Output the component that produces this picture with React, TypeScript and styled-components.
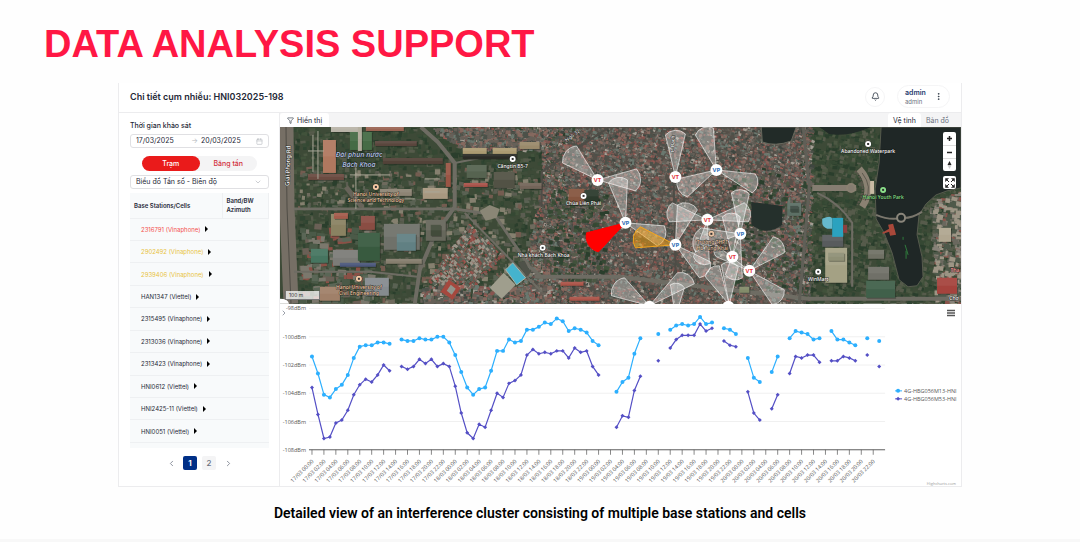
import { useState } from 'react';
import styled, { createGlobalStyle, css } from 'styled-components';
import { Bell, Calendar, ChevronDown, ChevronLeft, ChevronRight, Filter, MoreVertical } from 'lucide-react';

const Colors = {
  accent: '#ff1744',
  red: '#ea1b1b',
  navy: '#002f87',
  text: '#1f2937',
  gray: '#6b7280',
  line: '#ececee',
  soft: '#f4f4f5',
  table: '#f8fafb'
};

const GlobalStyle = createGlobalStyle`
  * {
    box-sizing: border-box;
  }
  body {
    margin: 0;
    background: #fefefe;
    font-family: Inter, 'Noto Sans', sans-serif;
    color: ${Colors.text};
  }
  button,
  input,
  select {
    font-family: inherit;
    color: inherit;
    margin: 0;
    padding: 0;
    border: none;
    background: none;
  }
  button {
    cursor: pointer;
  }
`;

const Page = styled.main`
  display: flex;
  flex-direction: column;
  min-height: 100vh;
  border-bottom: 3px solid #f8f8f8;
`;

const Title = styled.h1`
  margin: 0;
  padding: 22px 44px 17px;
  font-family: 'Liberation Sans', sans-serif;
  font-size: 38px;
  line-height: 44px;
  font-weight: 700;
  color: ${Colors.accent};
`;

const Caption = styled.p`
  margin: 0;
  padding-top: 16px;
  text-align: center;
  font-family: Roboto, sans-serif;
  font-size: 14px;
  line-height: 20px;
  font-weight: 600;
  color: #000;
`;

const Card = styled.section`
  margin: 0 118px;
  background: #fff;
  border: 1px solid ${Colors.line};
  border-top: none;
`;

const CardHeader = styled.header`
  display: flex;
  align-items: center;
  gap: 12px;
  height: 30px;
  padding: 0 11px 2px;
  border-bottom: 1px solid ${Colors.line};

  h2 {
    flex: 1;
    margin: 0;
    font-size: 9px;
    font-weight: 600;
  }
`;

const BellButton = styled.button`
  display: flex;
  align-items: center;
  justify-content: center;
  width: 20px;
  height: 20px;
  border: 1px solid #f5f5f6;
  border-radius: 50%;
`;

const UserPill = styled.button`
  display: flex;
  align-items: center;
  justify-content: space-between;
  width: 53px;
  height: 23px;
  padding: 0 6px 0 7px;
  border: 1px solid #f5f5f6;
  border-radius: 12px;
  text-align: left;

  span {
    display: block;
    font-size: 6px;
    line-height: 9px;
    color: ${Colors.gray};
  }
  .name {
    font-size: 7px;
    font-weight: 600;
    color: #1e3a6e;
  }
`;

const Columns = styled.div`
  display: grid;
  grid-template-columns: 161px minmax(0, 1fr);
`;

const Sidebar = styled.aside`
  display: flex;
  flex-direction: column;
  padding: 8px 10px 0 11px;
  border-right: 1px solid ${Colors.line};

  .field-label {
    font-size: 7px;
    line-height: 9px;
    font-weight: 500;
  }
`;

const DateRange = styled.div`
  display: flex;
  align-items: center;
  height: 14px;
  margin-top: 4px;
  padding: 0 5px;
  border: 1px solid #e0e0e3;
  border-radius: 3px;
  color: #b4b7bd;

  input {
    width: 56px;
    min-width: 0;
    font-size: 7px;
    line-height: 10px;
    color: ${Colors.text};
  }
  .arrow {
    width: 10px;
    font-size: 7px;
    line-height: 10px;
  }
`;

const Segment = styled.div`
  display: flex;
  align-self: center;
  width: 115px;
  margin: 8px 0 4px;
  border-radius: 8px;
  background: ${Colors.soft};
`;

const SegmentButton = styled.button<{ $active?: boolean }>`
  flex: 1;
  height: 15px;
  border-radius: 8px;
  font-size: 7px;
  font-weight: 500;
  color: ${({ $active }) => ($active ? '#fff' : '#d22f3c')};
  background: ${({ $active }) => ($active ? Colors.red : 'transparent')};
`;

const SelectBox = styled.div`
  display: grid;
  grid-template-columns: 1fr 14px;
  align-items: center;
  height: 14px;
  border: 1px solid #e0e0e3;
  border-radius: 3px;

  select {
    grid-column: 1 / 3;
    grid-row: 1;
    appearance: none;
    padding-left: 5px;
    font-size: 7px;
    line-height: 10px;
  }
  svg {
    grid-column: 2;
    grid-row: 1;
    color: #b4b7bd;
    pointer-events: none;
  }
`;

const TableBox = styled.div`
  margin-top: 4px;
  padding-bottom: 5px;
  background: ${Colors.table};
`;

const StationTable = styled.table`
  width: 100%;
  height: 250px;
  border-collapse: collapse;
  table-layout: fixed;
  font-size: 6px;
  line-height: 9px;

  th {
    height: 25px;
    padding: 0 4px;
    text-align: left;
    font-weight: 600;
    border-right: 1px solid #eef0f2;
    border-bottom: 1px solid #eef0f2;
  }
  th:first-child {
    width: 92px;
  }
  td {
    padding: 0 0 0 11px;
    border-bottom: 1px solid #eef0f2;
  }
`;

const StationButton = styled.button<{ $tone?: string }>`
  display: flex;
  align-items: center;
  gap: 5px;
  font-size: 6px;
  line-height: 9px;
  font-weight: 400;
  color: ${({ $tone }) => $tone || Colors.text};

  svg {
    color: #000;
  }
`;

const Pager = styled.nav`
  display: flex;
  justify-content: center;
  align-items: center;
  gap: 5px;
  padding-top: 8px;
  color: ${Colors.gray};
`;

const PageButton = styled.button<{ $active?: boolean }>`
  display: flex;
  align-items: center;
  justify-content: center;
  width: 14px;
  height: 14px;
  border-radius: 2px;
  font-size: 8px;
  font-weight: 500;
  background: ${Colors.soft};

  ${({ $active }) =>
    $active &&
    css`
      color: #fff;
      background: ${Colors.navy};
      font-weight: 700;
    `}
`;

const PagerArrow = styled(PageButton)`
  background: none;
`;

const Toolbar = styled.div`
  display: flex;
  height: 14px;
  padding-right: 7px;
  background: ${Colors.soft};

  .spacer {
    flex: 1;
  }
`;

const ToolbarTab = styled.button<{ $active?: boolean }>`
  display: flex;
  align-items: center;
  gap: 3px;
  padding: 0 5px;
  border-radius: 3px 3px 0 0;
  font-size: 7px;
  font-weight: 400;
  color: ${({ $active }) => ($active ? Colors.text : Colors.gray)};
  background: ${({ $active }) => ($active ? '#fff' : 'transparent')};

  &:first-child {
    padding: 0 7px;
  }
`;

const MapBox = styled.div`
  position: relative;

  > svg {
    display: block;
    width: 100%;
  }
`;

const MapControls = styled.div`
  position: absolute;
  top: 5px;
  right: 5px;
  display: flex;
  flex-direction: column;
  gap: 5px;
`;

const ControlGroup = styled.div`
  display: flex;
  flex-direction: column;
  border-radius: 2px;
  background: #fff;

  button {
    display: flex;
    align-items: center;
    justify-content: center;
    width: 13px;
    height: 13px;
    color: #222;
  }
  button + button {
    border-top: 1px solid #ddd;
  }
`;

const ScaleBar = styled.div`
  position: absolute;
  left: 5px;
  bottom: 4px;
  width: 35px;
  height: 9px;
  padding-left: 3px;
  border: 1px solid #777;
  border-top: none;
  background: rgba(255, 255, 255, 0.75);
  font-size: 5px;
  line-height: 8px;
  color: #333;
`;

const ChartBox = styled.div`
  position: relative;

  > svg {
    display: block;
    width: 100%;
  }
`;

const CollapseButton = styled.button`
  position: absolute;
  top: 5px;
  left: 0;
  display: flex;
  color: ${Colors.gray};
`;

const MenuButton = styled.button`
  position: absolute;
  top: 5px;
  right: 6px;
  display: flex;
`;

type Point = [number, number];

/* ---------- satellite layer ---------- */

const random = (seed: number) => () => {
  seed = (seed * 1664525 + 1013904223) % 4294967296;
  return seed / 4294967296;
};

const inside = (x: number, y: number, poly: Point[]) => {
  let hit = false;
  for (let i = 0, j = poly.length - 1; i < poly.length; j = i++) {
    const [xi, yi] = poly[i];
    const [xj, yj] = poly[j];
    if (yi > y !== yj > y && x < ((xj - xi) * (y - yi)) / (yj - yi) + xi) hit = !hit;
  }
  return hit;
};

type Scatter = { seed: number; area: Point[]; count: number; size: [number, number]; tilt: number; colors: string[] };

// one path per colour, every roof or tree is a small rotated quad
const scatter = ({ seed, area, count, size, tilt, colors }: Scatter) => {
  const next = random(seed);
  const paths = colors.map(() => '');
  const xs = area.map((p) => p[0]);
  const ys = area.map((p) => p[1]);
  const [x0, x1, y0, y1] = [Math.min(...xs), Math.max(...xs), Math.min(...ys), Math.max(...ys)];

  for (let i = 0; i < count; i++) {
    const x = x0 + next() * (x1 - x0);
    const y = y0 + next() * (y1 - y0);
    const w = size[0] + next() * (size[1] - size[0]);
    const h = size[0] + next() * (size[1] - size[0]) * 0.7;
    const a = tilt + (next() - 0.5) * 0.3;
    const c = Math.floor(next() * colors.length);
    if (!inside(x, y, area)) continue;
    const [ux, uy, vx, vy] = [Math.cos(a) * w, Math.sin(a) * w, -Math.sin(a) * h, Math.cos(a) * h];
    paths[c] += `M${x.toFixed(1)} ${y.toFixed(1)}l${ux.toFixed(1)} ${uy.toFixed(1)}l${vx.toFixed(1)} ${vy.toFixed(1)}l${(-ux).toFixed(1)} ${(-uy).toFixed(1)}z`;
  }
  return paths.map((d, i) => ({ d, fill: colors[i] }));
};

const rect = (x: number, y: number, w: number, h: number): Point[] => [
  [x, y],
  [x + w, y],
  [x + w, y + h],
  [x, y + h]
];

const TREES = ['#2f4431', '#384b36', '#41523b', '#2a3e2c', '#4c5843', '#565b4b', '#354833'];
const ROOFS = [
  '#8a544f', '#9c5f57', '#6c645f', '#7e786f', '#a39d93', '#4d554e', '#3f4640',
  '#7c5751', '#5e5c55', '#6a786f', '#4c5149', '#85695f', '#666058'
];
const CAMPUS = ['#6e6a5d', '#5b5d51', '#47533f', '#394935', '#745c50', '#5a6253', '#3f4d3a', '#85806f'];

const GROUND: Scatter[] = [
  { seed: 11, area: rect(0, 0, 290, 177), count: 2600, size: [2, 6], tilt: 0, colors: TREES },
  { seed: 12, area: rect(100, 40, 160, 137), count: 700, size: [2, 7], tilt: 0, colors: CAMPUS },
  { seed: 22, area: rect(18, 40, 90, 45), count: 120, size: [2, 6], tilt: 0, colors: CAMPUS },
  { seed: 13, area: rect(18, 95, 70, 82), count: 200, size: [3, 9], tilt: 0, colors: ['#8b5046', '#6a6056', '#7b786d', '#4b5a48', '#5a6656'] },
  { seed: 14, area: rect(520, 0, 162, 177), count: 2600, size: [2, 6], tilt: 0.2, colors: TREES },
  { seed: 15, area: [[262, 0], [533, 0], [530, 177], [240, 177], [250, 110], [262, 60]], count: 13000, size: [1, 4], tilt: 0.3, colors: ROOFS },
  { seed: 16, area: [[150, 0], [262, 0], [262, 22], [185, 22]], count: 1200, size: [1, 5], tilt: 0.1, colors: ROOFS },
  { seed: 17, area: [[190, 96], [224, 126], [182, 170], [148, 153]], count: 1900, size: [1, 4], tilt: 0.8, colors: ['#9d564f', '#8a4c46', '#73665e', '#586358', '#9a9488'] },
  { seed: 18, area: rect(140, 158, 130, 19), count: 420, size: [2, 5], tilt: 0, colors: ROOFS },
  { seed: 19, area: [[650, 72], [682, 64], [682, 177], [656, 177]], count: 500, size: [2, 6], tilt: 0.1, colors: ['#8b554c', '#878278', '#6a685e', '#4e594a', '#9d9585'] },
  { seed: 20, area: rect(450, 40, 85, 125), count: 240, size: [2, 5], tilt: 0.2, colors: TREES },
  { seed: 21, area: rect(268, 62, 60, 90), count: 200, size: [2, 6], tilt: 0.2, colors: TREES }
];

const BLOCKS: [number, number, number, number, string][] = [
  [43, 13, 13, 33, '#b0785f'],
  [28, 47, 36, 6, '#6b4b41'],
  [51, 0, 30, 5, '#b9b4a8'],
  [86, 0, 38, 4, '#9b6453'],
  [70, 5, 22, 18, '#456b45'],
  [78, 0, 4, 24, '#b0aa9a'],
  [95, 14, 42, 5, '#5a463d'],
  [103, 31, 60, 6, '#524238'],
  [166, 36, 5, 24, '#9a5545'],
  [143, 61, 25, 11, '#a89880'],
  [100, 62, 32, 7, '#8d8474'],
  [183, 21, 24, 6, '#ac9b72'],
  [213, 21, 24, 6, '#ac9b72'],
  [183, 27, 54, 5, '#2b2c26'],
  [240, 15, 20, 7, '#9a8a6b'],
  [184, 56, 24, 4, '#a8534a'],
  [187, 38, 20, 13, '#566350'],
  [214, 45, 21, 16, '#525245'],
  [240, 56, 22, 6, '#736559'],
  [31, 122, 17, 14, '#467560'],
  [51, 87, 15, 22, '#8a8262'],
  [54, 86, 14, 6, '#a45c4c'],
  [81, 89, 14, 14, '#8a4d43'],
  [53, 123, 27, 16, '#7c7c78'],
  [60, 136, 36, 4, '#4c587c'],
  [78, 106, 22, 28, '#385a3f'],
  [85, 151, 24, 18, '#858b8f'],
  [40, 160, 20, 14, '#a08069'],
  [104, 97, 36, 26, '#6f716a'],
  [117, 107, 19, 17, '#618083'],
  [106, 132, 36, 5, '#857d6d'],
  [146, 93, 20, 21, '#66675b'],
  [151, 98, 10, 11, '#424b3a'],
  [281, 155, 23, 4, '#ac5449'],
  [290, 170, 30, 4, '#ac5449'],
  [289, 62, 16, 16, '#85553f'],
  [305, 63, 14, 13, '#2b3a2c'],
  [508, 76, 14, 13, '#5c6f65'],
  [511, 79, 8, 6, '#3d4b43'],
  [543, 108, 21, 12, '#585b5d'],
  [546, 121, 22, 35, '#a4a184'],
  [549, 126, 16, 8, '#8f9076'],
  [589, 123, 16, 9, '#707165'],
  [589, 140, 21, 13, '#707068'],
  [587, 154, 29, 17, '#40604a'],
  [460, 160, 10, 6, '#838c6a'],
  [660, 101, 12, 14, '#b0a690'],
  [658, 151, 20, 16, '#a5433d']
];

const LAKE: Point[] = [
  [602, 0], [682, 0], [682, 61], [668, 64], [657, 68], [647, 77], [640, 88], [638, 108], [643, 130], [644, 150],
  [638, 159], [629, 160], [620, 153], [613, 126], [605, 106], [597, 92], [596, 62], [600, 36]
];

/* ---------- stations on the map ---------- */

type Sector = { apex: Point; from: Point; to: Point; tone?: 'red' | 'amber' };

const SECTORS: Sector[] = [
  { apex: [318, 53], from: [283, 36], to: [297, 19] },
  { apex: [318, 53], from: [357, 42], to: [356, 64] },
  { apex: [346, 96], from: [329, 56], to: [348, 53] },
  { apex: [346, 96], from: [385, 99], to: [378, 119] },
  { apex: [396, 50], from: [386, 8], to: [406, 7] },
  { apex: [437, 43], from: [416, 8], to: [434, 1] },
  { apex: [437, 43], from: [476, 47], to: [473, 66] },
  { apex: [437, 43], from: [398, 52], to: [408, 70] },
  { apex: [428, 93], from: [393, 76], to: [390, 95] },
  { apex: [428, 93], from: [465, 76], to: [469, 95] },
  { apex: [428, 93], from: [414, 130], to: [430, 137] },
  { apex: [461, 107], from: [452, 66], to: [470, 67] },
  { apex: [461, 107], from: [422, 101], to: [416, 125] },
  { apex: [461, 107], from: [446, 148], to: [463, 151] },
  { apex: [396, 118], from: [398, 78], to: [418, 83] },
  { apex: [396, 118], from: [431, 135], to: [420, 151] },
  { apex: [453, 130], from: [443, 90], to: [461, 90] },
  { apex: [470, 144], from: [437, 118], to: [437, 130] },
  { apex: [470, 144], from: [494, 110], to: [505, 126] },
  { apex: [470, 144], from: [505, 163], to: [493, 178] },
  { apex: [370, 179], from: [345, 151], to: [332, 169] },
  { apex: [370, 179], from: [398, 146], to: [415, 157] },
  { apex: [396, 190], from: [391, 158], to: [405, 161] },
  { apex: [450, 178], from: [426, 150], to: [440, 139] },
  { apex: [450, 178], from: [442, 138], to: [459, 140] },
  { apex: [346, 96], from: [307, 106], to: [319, 125], tone: 'red' },
  { apex: [396, 118], from: [361, 100], to: [356, 121], tone: 'amber' }
];

const TONES = {
  red: { fill: '#ff0000', stroke: '#ff0000' },
  amber: { fill: 'rgba(255, 165, 0, 0.45)', stroke: '#f2a41c' },
  plain: { fill: 'rgba(255, 255, 255, 0.3)', stroke: 'rgba(255, 255, 255, 0.6)' }
};

const sectorPath = ({ apex, from, to }: Sector) => {
  const r = Math.hypot(from[0] - to[0], from[1] - to[1]) * 0.7;
  const cross = (from[0] - apex[0]) * (to[1] - apex[1]) - (from[1] - apex[1]) * (to[0] - apex[0]);
  return `M${apex} L${from} A${r} ${r} 0 0 ${cross > 0 ? 1 : 0} ${to} Z`;
};

const SITES: { at: Point; code: string }[] = [
  { at: [318, 53], code: 'VT' },
  { at: [346, 96], code: 'VP' },
  { at: [396, 50], code: 'VT' },
  { at: [437, 43], code: 'VP' },
  { at: [428, 93], code: 'VT' },
  { at: [461, 107], code: 'VP' },
  { at: [396, 118], code: 'VP' },
  { at: [453, 130], code: 'VT' },
  { at: [470, 144], code: 'VT' },
  { at: [370, 180], code: '' },
  { at: [449, 180], code: '' }
];

const PLACES: { at: Point; lines: string[]; fill: string; icon?: Point }[] = [
  { at: [96, 69], lines: ['Hanoi University of', 'Science and Technology'], fill: '#f6c9a4', icon: [96, 60] },
  { at: [79, 162], lines: ['Hanoi University of', 'Civil Engineering'], fill: '#f6c9a4', icon: [79, 152] },
  { at: [233, 41], lines: ['Căngtin B5-7'], fill: '#fff', icon: [233, 32] },
  { at: [304, 78], lines: ['Chùa Liên Phái'], fill: '#fff', icon: [304, 69] },
  { at: [264, 130], lines: ['Nhà khách Bách Khoa'], fill: '#fff', icon: [263, 121] },
  { at: [589, 26], lines: ['Abandoned Waterpark'], fill: '#fff', icon: [589, 17] },
  { at: [604, 72], lines: ['Hanoi Youth Park'], fill: '#8be08b', icon: [604, 63] },
  { at: [539, 154], lines: ['WinMart'], fill: '#fff', icon: [539, 145] },
  { at: [433, 117], lines: ['Trường THPT', 'Hồ Tùng Khai'], fill: '#e9c2a2', icon: [432, 107] },
  { at: [676, 145], lines: ['Tha'], fill: '#ff9b9b' },
  { at: [675, 173], lines: ['Chợ'], fill: '#fff' }
];

function SatelliteMap() {
  return (
    <svg viewBox="0 0 682 177" role="img" aria-label="Bản đồ vệ tinh">
      <rect width="682" height="177" fill="#3d4a37" />
      <path d="M262 0H533L530 177H240L250 110L262 60Z" fill="#544f48" />
      {GROUND.map((g) =>
        scatter(g).map((p) => <path key={`${g.seed}${p.fill}`} d={p.d} fill={p.fill} />)
      )}

      {/* streets */}
      <g fill="none" stroke="#6e6c63" strokeLinejoin="round">
        <path d="M6 0 L7 80 L11 177" strokeWidth="15" stroke="#766f65" />
        <path d="M6 0 L7 80 L11 177" strokeWidth="1" stroke="#4f4c45" />
        <path d="M141 0 L158 15 L175 36 V80 L155 108 L140 143 L135 177" strokeWidth="4" />
        <path d="M14 82 H175 L215 88 L250 140 L262 150" strokeWidth="3" />
        <path d="M175 36 L205 30" strokeWidth="2" />
        <path d="M185 86 L262 165" strokeWidth="2" />
        <path d="M14 145 H90 L138 150" strokeWidth="2" />
        <path d="M255 150 H340 L440 162 L530 172 H682" strokeWidth="4" />
        <path d="M330 0 L262 45 V80" strokeWidth="2" stroke="#4e4c46" />
        <path d="M393 0 L397 177" strokeWidth="2" stroke="#4e4c46" />
        <path d="M524 0 L530 60 L520 177" strokeWidth="3" stroke="#605f57" />
        <path d="M533 61 H577" strokeWidth="6" stroke="#857d71" />
        <path d="M538 66 Q560 76 573 96 V160" strokeWidth="2" />
        <path d="M66 60 L82 80" strokeWidth="5" stroke="#68645a" />
      </g>
      <path d="M200 84 L210 78 L220 82 L217 91 L206 94 Z" fill="#8a8676" />

      {BLOCKS.map(([x, y, w, h, fill]) => (
        <g key={`${x}-${y}`}>
          <rect x={x + 1} y={y + 1} width={w} height={h} fill="#1d241c" opacity="0.4" />
          <rect x={x} y={y} width={w} height={h} fill={fill} />
          <rect x={x} y={y} width={w} height={h / 2} fill="#fff" opacity="0.06" />
        </g>
      ))}
      <path d="M161 165 L169 153 L181 161 L173 173 Z" fill="#a5483e" />
      <path d="M167 164 L171 158 L176 162 L172 168 Z" fill="#92958c" />
      <path d="M210 161 L224 146 L236 158 L222 172 Z" fill="#9f9e8d" />
      <path d="M226 143 L233 136 L246 151 L237 158 Z" fill="#45b3cd" stroke="#a9b7ae" strokeWidth="1" />
      <path d="M238 136 L245 134 L251 146 L247 150 Z" fill="#4f5249" />

      {/* water */}
      <path d="M482 0 H517 L512 14 Q496 20 483 15 Z" fill="#222b28" stroke="#66675c" />
      <path d="M472 75 L503 79 V98 Q488 110 472 98 Z" fill="#25302c" />
      <path d="M540 0 H592 Q570 10 550 7 Z" fill="#222b28" />
      <polygon points={LAKE.join(' ')} fill="#1f2726" stroke="#565a4d" />
      <path d="M597 88 Q611 94 622 91 Q632 92 643 85" fill="none" stroke="#7b776d" strokeWidth="2" />
      <circle cx="622" cy="91" r="4" fill="#1f2726" stroke="#8a867b" strokeWidth="2" />
      <path d="M603 106 L610 102 L609 98 L614 97 L617 108 L611 109 L610 105 L604 107 Z" fill="#a8483a" />
      <path d="M626 118 L629 128 M624 110 V113 M627 124 V132" stroke="#2f7a3c" />
      <path d="M543 92 Q552 88 553 92 V102 H548 Q543 100 543 96 Z" fill="#66b9cc" />
      <rect x="553" y="91" width="11" height="19" fill="#2ba2bf" />
      <rect x="564" y="98" width="4" height="8" fill="#8c4040" />

      {/* amphitheatre */}
      <path d="M580 42 Q596 60 583 80" fill="none" stroke="#8a8172" strokeWidth="7" />
      <path d="M576 44 Q590 60 578 78" fill="none" stroke="#5a564b" strokeWidth="2" strokeDasharray="2 1" />
      <path d="M583 46 Q594 60 586 74" fill="none" stroke="#5e594e" strokeWidth="1" />
      <path d="M593 54 V67" fill="none" stroke="#c9bba4" strokeWidth="4" />
      <circle cx="572" cy="61" r="4" fill="none" stroke="#8a8172" strokeWidth="2" />

      {/* campus paths */}
      <path d="M33 8 V45 M38 4 V52 M28 24 H44 M76 36 V82 M70 48 H110 M145 52 H160 M145 65 H160 M90 72 H135" stroke="#a9a697" fill="none" />

      {SECTORS.map((s, i) => (
        <path key={i} d={sectorPath(s)} {...TONES[s.tone || 'plain']} strokeWidth="1" />
      ))}

      <g
        fontFamily="'Noto Sans', sans-serif"
        fontSize="5"
        fontWeight="500"
        textAnchor="middle"
        paintOrder="stroke"
        stroke="rgba(20, 24, 20, 0.7)"
        strokeWidth="1"
      >
        {PLACES.map((p) => (
          <g key={p.lines[0] + p.at}>
            {p.lines.map((line, i) => (
              <text key={line} x={p.at[0]} y={p.at[1] + i * 6} fill={p.fill}>
                {line}
              </text>
            ))}
            {p.icon && (
              <>
                <circle cx={p.icon[0]} cy={p.icon[1]} r="3" fill={p.fill} />
                <rect x={p.icon[0] - 1} y={p.icon[1] - 1} width="2" height="2" fill="#333" stroke="none" />
              </>
            )}
          </g>
        ))}
        <g fontSize="7" fontStyle="italic" fill="#b9c6ee">
          <text x="79" y="30">Đài phun nước</text>
          <text x="79" y="40">Bách Khoa</text>
        </g>
        <text transform="translate(10 39) rotate(-88)" fill="#fff" fontSize="6">
          Giai Phong Rd
        </text>
        <text transform="translate(294 10) rotate(-38)" fill="#ddd">
          Ngõ 32
        </text>
        <text transform="translate(395 17) rotate(-88)" fill="#fff">
          P. Bạch
        </text>
      </g>

      <g fontFamily="'Noto Sans', sans-serif" fontWeight="700" textAnchor="middle">
        {SITES.map((s) => (
          <g key={String(s.at)}>
            <circle cx={s.at[0]} cy={s.at[1]} r="6" fill="#fff" />
            <text x={s.at[0]} y={s.at[1] + 2} fontSize="6" fill={s.code === 'VT' ? '#e5383f' : '#2c6cb5'}>
              {s.code}
            </text>
          </g>
        ))}
      </g>
      <path d="M0 172 Q8 172 9 177 H0 Z" fill="#fff" />
    </svg>
  );
}

/* ---------- chart ---------- */

const N = null;

// hourly values below zero, null where the cell sent no report
const SERIES = [
  {
    name: '4G-HBG056M13-HNI',
    color: '#2caffe',
    data: [
      101.4, 102.6, 104.1, 104.3, 103.7, 103.4, 102.7, 101.5, 100.7, 100.6, 100.6, 100.4, 100.4, 100.5, N, 100.2,
      100.3, 100.3, 100.1, 100.2, 100.2, 100, 100, 100.4, 101.3, 102.5, 103.6, 104.1, 103.7, 103.6, 102.4, 101,
      101, 100.2, 100.4, 100.3, 99.5, 99.5, 99.3, 99, 99.1, 98.7, 98.9, 99.6, 99.4, 99.5, 99.7, 100.3,
      100.6, N, N, 103.9, 103.2, 102.9, 101.2, 100.1, N, N, 99.8, N, 99.5, 99.2, 99.1, 99.2,
      99.1, 98.6, 99.1, 99, N, 99.4, 99.5, 99.8, N, 101.5, 102.9, 103.2, N, 102.5, 101.4, N,
      100.1, 99.6, 99.7, 99.8, 100.2, 100.1, N, 99.6, 100.2, 100.2, 100.4, 100.6, N, 100.1, N, 100.3
    ]
  },
  {
    name: '4G-HBG056M53-HNI',
    color: '#544fc5',
    data: [
      103.6, 105.5, 107.2, 107.1, 106.1, 105.9, 105.2, 104.1, 103.4, 103, 103.2, 102.7, 102, 102.4, N, 102.1,
      102.3, 102.1, 101.6, 101.9, 101.6, 102.1, 101.9, 102.1, 103.5, 105.4, 106.8, 107.2, 106.2, 106.4, 105.2, 104,
      104.3, 103.3, 103.1, 102.7, 101.3, 100.9, 101.2, 101.1, 101.2, 101, 101, 101.5, 100.8, 101.1, 101, 102.1,
      102.7, N, N, 106.4, 105.6, 105.7, 103.8, 102.8, N, N, 101.7, N, 100.8, 100.2, 99.9, 99.9,
      99.9, 99.1, 99.6, 99.4, N, 100.3, 100.6, 100.7, N, 103.9, 105.4, 105.9, N, 105.1, 104.1, N,
      102.6, 101.4, 101.5, 101.3, 101.3, 101.8, N, 101.7, 101.7, 101.4, 101.5, 101.7, N, 101.3, N, 102.1
    ]
  }
];

const chartX = (hour: number) => 32 + hour * 5.98;
const chartY = (value: number) => 4.5 + (value - 98) * 14.15;

const linePath = (data: (number | null)[]) =>
  data
    .map((v, i) => (v === null ? '' : `${i > 0 && data[i - 1] !== null ? 'L' : 'M'}${chartX(i).toFixed(1)} ${chartY(v).toFixed(1)}`))
    .join('');

const Marker = ({ x, y, index, color }: { x: number; y: number; index: number; color: string }) =>
  index === 0 ? (
    <circle cx={x} cy={y} r="2" fill={color} />
  ) : (
    <path d={`M${x} ${y - 2}l2 2l-2 2l-2 -2z`} fill={color} />
  );

function SignalChart() {
  const hours = Array.from({ length: 48 }, (_, i) => i * 2);

  return (
    <svg viewBox="0 0 682 183" role="img" aria-label="Biểu đồ tần số - biên độ">
      <g fontFamily="'Open Sans', sans-serif" fontSize="5.5" fill="#555">
        {[98, 100, 102, 104, 106, 108].map((v) => (
          <g key={v}>
            <path d={`M29 ${chartY(v)}H606`} stroke={v === 108 ? '#333' : '#e9e9e9'} strokeWidth={v === 108 ? 0.8 : 0.7} />
            <text x="26" y={chartY(v) + 2} textAnchor="end">
              -{v}dBm
            </text>
          </g>
        ))}
        {hours.map((h) => {
          const label = `${17 + Math.floor(h / 24)}/03 ${String(h % 24).padStart(2, '0')}:00`;
          return (
            <g key={h}>
              <path d={`M${chartX(h)} 146v5`} stroke="#555" strokeWidth="0.7" />
              <text transform={`translate(${chartX(h) + 2} 158) rotate(-45)`} textAnchor="end">
                {label}
              </text>
            </g>
          );
        })}
        {SERIES.map((s, index) => (
          <g key={s.name}>
            <path d={linePath(s.data)} fill="none" stroke={s.color} strokeWidth="1.2" />
            {s.data.map((v, i) => v !== null && <Marker key={i} x={chartX(i)} y={chartY(v)} index={index} color={s.color} />)}
            <path d={`M616 ${87 + index * 8}h7`} stroke={s.color} />
            <Marker x={619} y={87 + index * 8} index={index} color={s.color} />
            <text x="625" y={89 + index * 8}>
              {s.name}
            </text>
          </g>
        ))}
        <text x="677" y="181" textAnchor="end" fontSize="4" fill="#999">
          Highcharts.com
        </text>
      </g>
    </svg>
  );
}

/* ---------- page ---------- */

const STATIONS = [
  { name: '2316791 (Vinaphone)', tone: '#f4514f' },
  { name: '2902492 (Vinaphone)', tone: '#e8c33f' },
  { name: '2939406 (Vinaphone)', tone: '#e8c33f' },
  { name: 'HAN1347 (Viettel)' },
  { name: '2315495 (Vinaphone)' },
  { name: '2313036 (Vinaphone)' },
  { name: '2313423 (Vinaphone)' },
  { name: 'HNI0612 (Viettel)' },
  { name: 'HNI2425-11 (Viettel)' },
  { name: 'HNI0051 (Viettel)' }
];

function StationPanel() {
  const [tab, setTab] = useState('station');
  const [page, setPage] = useState(1);

  return (
    <Sidebar>
      <label className="field-label" htmlFor="from">
        Thời gian khảo sát
      </label>
      <DateRange>
        <input id="from" defaultValue="17/03/2025" />
        <span className="arrow">→</span>
        <input aria-label="Đến ngày" defaultValue="20/03/2025" />
        <Calendar size={7} />
      </DateRange>
      <Segment>
        <SegmentButton $active={tab === 'station'} onClick={() => setTab('station')}>
          Trạm
        </SegmentButton>
        <SegmentButton $active={tab === 'band'} onClick={() => setTab('band')}>
          Băng tần
        </SegmentButton>
      </Segment>
      <SelectBox>
        <select aria-label="Loại biểu đồ">
          <option>Biểu đồ Tần số - Biên độ</option>
        </select>
        <ChevronDown size={8} />
      </SelectBox>
      <TableBox>
        <StationTable>
          <thead>
            <tr>
              <th>Base Stations/Cells</th>
              <th>
                Band/BW
                <br />
                Azimuth
              </th>
            </tr>
          </thead>
          <tbody>
            {STATIONS.map((s) => (
              <tr key={s.name}>
                <td colSpan={2}>
                  <StationButton $tone={s.tone}>
                    {s.name}
                    <svg width="3" height="6" viewBox="0 0 3 6">
                      <path d="M0 0L3 3L0 6Z" fill="currentColor" />
                    </svg>
                  </StationButton>
                </td>
              </tr>
            ))}
          </tbody>
        </StationTable>
      </TableBox>
      <Pager aria-label="Phân trang">
        <PagerArrow aria-label="Trang trước">
          <ChevronLeft size={9} />
        </PagerArrow>
        {[1, 2].map((n) => (
          <PageButton key={n} $active={page === n} onClick={() => setPage(n)}>
            {n}
          </PageButton>
        ))}
        <PagerArrow aria-label="Trang sau">
          <ChevronRight size={9} />
        </PagerArrow>
      </Pager>
    </Sidebar>
  );
}

function App() {
  return (
    <Page>
      <GlobalStyle />
      <Title>DATA ANALYSIS SUPPORT</Title>
      <Card>
        <CardHeader>
          <h2>Chi tiết cụm nhiễu: HNI032025-198</h2>
          <BellButton aria-label="Thông báo">
            <Bell size={9} />
          </BellButton>
          <UserPill>
            <div>
              <span className="name">admin</span>
              <span>admin</span>
            </div>
            <MoreVertical size={9} />
          </UserPill>
        </CardHeader>
        <Columns>
          <StationPanel />
          <div>
            <Toolbar>
              <ToolbarTab $active>
                <Filter size={7} />
                Hiển thị
              </ToolbarTab>
              <div className="spacer" />
              <ToolbarTab $active>Vệ tinh</ToolbarTab>
              <ToolbarTab>Bản đồ</ToolbarTab>
            </Toolbar>
            <MapBox>
              <SatelliteMap />
              <ScaleBar>100 m</ScaleBar>
              <MapControls>
                <ControlGroup>
                  <button aria-label="Phóng to">
                    <svg width="7" height="7" viewBox="0 0 7 7" stroke="currentColor" strokeWidth="1.5">
                      <path d="M1 3.5H6M3.5 1V6" />
                    </svg>
                  </button>
                  <button aria-label="Thu nhỏ">
                    <svg width="7" height="7" viewBox="0 0 7 7" stroke="currentColor" strokeWidth="1.5">
                      <path d="M1 3.5H6" />
                    </svg>
                  </button>
                  <button aria-label="Hướng bắc">
                    <svg width="5" height="8" viewBox="0 0 5 8">
                      <path d="M2.5 0L4.5 4H0.5Z" fill="currentColor" />
                      <path d="M2.5 8L4.5 4H0.5Z" fill="#ccc" />
                    </svg>
                  </button>
                </ControlGroup>
                <ControlGroup>
                  <button aria-label="Toàn màn hình">
                    <svg width="10" height="10" viewBox="0 0 10 10" fill="currentColor" stroke="currentColor">
                      <path d="M0.5 0.5H3.5L0.5 3.5ZM9.5 0.5V3.5L6.5 0.5ZM0.5 9.5V6.5L3.5 9.5ZM9.5 9.5H6.5L9.5 6.5Z" strokeWidth="0.5" />
                      <path d="M1.5 1.5L4 4M8.5 1.5L6 4M1.5 8.5L4 6M8.5 8.5L6 6" />
                    </svg>
                  </button>
                </ControlGroup>
              </MapControls>
            </MapBox>
            <ChartBox>
              <SignalChart />
              <CollapseButton aria-label="Mở rộng">
                <ChevronRight size={8} />
              </CollapseButton>
              <MenuButton aria-label="Menu biểu đồ">
                <svg width="8" height="8" viewBox="0 0 8 8" stroke="#555" strokeWidth="1.5">
                  <path d="M0 1.5H8M0 4H8M0 6.5H8" />
                </svg>
              </MenuButton>
            </ChartBox>
          </div>
        </Columns>
      </Card>
      <Caption>Detailed view of an interference cluster consisting of multiple base stations and cells</Caption>
    </Page>
  );
}

export default App;
